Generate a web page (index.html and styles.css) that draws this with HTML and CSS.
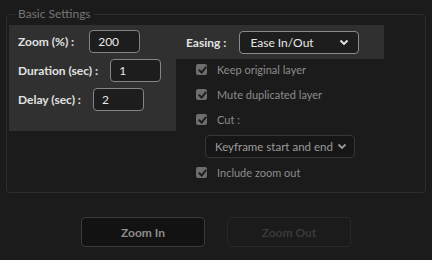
FILE: index.html
```html
<!DOCTYPE html>
<html>
<head>
    <meta charset="utf-8">
    <title>Zoom Settings</title>
    <link rel="stylesheet" href="styles.css">
</head>
<body>
    <fieldset class="settings">
        <legend>Basic Settings</legend>
        <div class="settings-grid">
            <div class="timing-panel">
                <div class="field-row"><label>Zoom (%) :</label><input class="num zoom" value="200"></div>
                <div class="field-row"><label>Duration (sec) :</label><input class="num" value="1"></div>
                <div class="field-row"><label>Delay (sec) :</label><input class="num" value="2"></div>
            </div>
            <div class="right-col">
                <div class="easing-row">
                    <label>Easing :</label>
                    <div class="select select-main">
                        <span>Ease In/Out</span>
                        <svg width="10" height="7" viewBox="0 0 10 7"><path d="M1.5 1.5 L5 5 L8.5 1.5" fill="none" stroke="currentColor" stroke-width="1.8"/></svg>
                    </div>
                </div>
                <div class="options">
                    <div class="check-row"><span class="check"></span>Keep original layer</div>
                    <div class="check-row"><span class="check"></span>Mute duplicated layer</div>
                    <div class="check-row cut"><span class="check"></span>Cut :</div>
                    <div class="select select-cut">
                        <span>Keyframe start and end</span>
                        <svg width="10" height="7" viewBox="0 0 10 7"><path d="M1.5 1.5 L5 5 L8.5 1.5" fill="none" stroke="currentColor" stroke-width="1.8"/></svg>
                    </div>
                    <div class="check-row last"><span class="check"></span>Include zoom out</div>
                </div>
            </div>
        </div>
    </fieldset>

    <div class="actions">
        <button class="btn">Zoom In</button>
        <button class="btn" disabled>Zoom Out</button>
    </div>
</body>
</html>
```
FILE: styles.css
```css
body {
    margin: 0;
    padding: 7px 6px 0;
    background-color: #1b1b1b;
    color: #dcdcdc;
    font-family: Lato, "Liberation Sans", sans-serif;
    font-size: 12px;
}

.settings {
    margin: 0;
    padding: 4px 2px 14px;
    border: 1px solid #2e2e2e;
    border-radius: 4px;
}

.settings legend {
    margin-left: 6px;
    padding: 0 3px;
    color: #767676;
    font-size: 12px;
    line-height: 14px;
}

.settings-grid {
    display: flex;
}

.timing-panel {
    width: 158px;
    height: 101px;
    padding: 5px 0 0 9px;
    background-color: #303030;
    display: flex;
    flex-direction: column;
    gap: 6px;
}

.field-row {
    display: flex;
    align-items: center;
    gap: 12px;
}

.field-row label,
.easing-row label {
    font-weight: bold;
    color: #e2e2e2;
}

.num {
    width: 51px;
    height: 23px;
    box-sizing: border-box;
    padding: 0 8px;
    border: 1px solid #858585;
    border-radius: 4px;
    background-color: #1d1d1d;
    color: #e8e8e8;
    font: 12px Lato, sans-serif;
}

.num.zoom {
    margin-left: 3px;
}

.right-col {
    flex: 1;
}

.easing-row {
    width: 198px;
    height: 34px;
    padding-left: 10px;
    background-color: #303030;
    display: flex;
    align-items: center;
    gap: 13px;
}

.select {
    height: 23px;
    box-sizing: border-box;
    border-radius: 4px;
    display: flex;
    align-items: center;
    justify-content: space-between;
    padding: 0 9px 0 10px;
    white-space: nowrap;
}

.select-main {
    width: 120px;
    border: 1px solid #8a8a8a;
    background-color: #1d1d1d;
    color: #e8e8e8;
}

.select-cut {
    width: 150px;
    margin: 0 0 9px 9px;
    padding: 0 7px 0 9px;
    border: 1px solid #363636;
    background-color: #161616;
    color: #9a9a9a;
    font-size: 11.5px;
}

.options {
    padding: 5px 0 0 20px;
}

.check-row {
    display: flex;
    align-items: center;
    gap: 10px;
    height: 11px;
    margin-bottom: 14px;
    color: #8c8c8c;
    font-size: 11px;
}

.check-row.cut {
    margin-bottom: 10px;
}

.check-row.last {
    margin-bottom: 0;
}

.check {
    width: 11px;
    height: 11px;
    border-radius: 2px;
    background-color: #6e6e6e;
    position: relative;
}

.check::after {
    content: "";
    position: absolute;
    left: 4px;
    top: 1px;
    width: 3px;
    height: 6px;
    border: solid #1e1e1e;
    border-width: 0 2px 2px 0;
    transform: rotate(40deg);
}

.actions {
    display: flex;
    justify-content: center;
    gap: 22px;
    margin-top: 24px;
}

.btn {
    width: 124px;
    height: 30px;
    border: 1px solid #3a3a3a;
    border-radius: 4px;
    background-color: #121212;
    color: #8c8c8c;
    font: bold 12px Lato, sans-serif;
}

.btn:disabled {
    border-color: #282828;
    background-color: #1b1b1b;
    color: #3a3a3a;
}
```
